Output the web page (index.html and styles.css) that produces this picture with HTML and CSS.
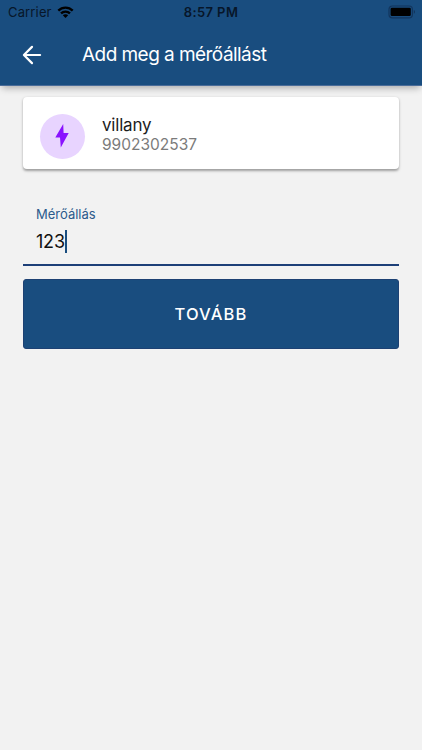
FILE: index.html
```html
<!DOCTYPE html>
<html lang="hu">
<head>
<meta charset="utf-8">
<title>Add meg a mérőállást</title>
<link rel="stylesheet" href="styles.css">
</head>
<body>

<header class="appbar">
	<div class="status">
		<div class="status-left">
			<span class="carrier">Carrier</span>
			<svg class="wifi" viewBox="0 0 17 12">
				<path class="arc" d="M1.3,4.6 C5.3,0.5 11.7,0.5 15.7,4.6"/>
				<path class="arc" d="M4,7.4 C6.5,4.9 10.5,4.9 13,7.4"/>
				<path d="M8.5,12 L5.8,9.3 C7.2,7.9 9.8,7.9 11.2,9.3 Z"/>
			</svg>
		</div>
		<span class="time">8:57 PM</span>
		<div class="status-right">
			<svg class="battery" viewBox="0 0 28 14">
				<rect class="shell" x="1" y="1" width="23.4" height="11.8" rx="3.4"/>
				<rect x="2.6" y="2.7" width="20.2" height="8.4" rx="1.3"/>
				<path class="tip" d="M25.8,5 C27.4,5.4 27.4,8.4 25.8,8.8 Z"/>
			</svg>
		</div>
	</div>
	<div class="nav">
		<svg class="back" viewBox="0 0 20 20">
			<path d="M18.1,10 H2.2 M10,1.9 L1.9,10 L10,18.1"/>
		</svg>
		<h1 class="title">Add meg a mérőállást</h1>
	</div>
</header>

<main class="content">
	<section class="card">
		<div class="badge">
			<svg class="bolt" viewBox="0 0 14 24">
				<path d="M8.2,0 L0.3,13.4 H5 L5.8,23.6 L13.7,9.1 H8.6 Z"/>
			</svg>
		</div>
		<div class="meter">
			<div class="name">villany</div>
			<div class="number">9902302537</div>
		</div>
	</section>

	<div class="field">
		<div class="label">Mérőállás</div>
		<div class="value"><span class="digits">123</span><span class="caret"></span></div>
	</div>

	<button class="next">TOVÁBB</button>
</main>

</body>
</html>
```
FILE: styles.css
```css
* {box-sizing: border-box;}

body {
	margin: 0;
	min-height: 100vh;
	background: #f2f2f2;
	font-family: Inter, "Liberation Sans", sans-serif;
	color: #1c1c1c;
}

svg {display: block;}

.appbar {
	height: 86px;
	background: #194d7f;
	border-bottom: 1px solid #4a6c99;
	box-shadow: 0 4px 7px -2px rgba(0,0,0,.3);
}

.status {
	display: grid;
	grid-template-columns: 1fr auto 1fr;
	align-items: center;
	height: 24px;
	padding: 0 6px;
	color: #071629;
	font-size: 13px;
	line-height: 24px;
}
.status-left {display: flex; align-items: center; gap: 5px; padding-left: 2px;}
.status-right {display: flex; justify-content: flex-end;}
.carrier {letter-spacing: .15px;}
.time {font-weight: 600; letter-spacing: .4px;}
.wifi {width: 17px; height: 12px;}
.wifi .arc {fill: none; stroke: #000; stroke-width: 2.3;}
.battery {width: 28px; height: 14px; margin-top: -1px;}
.battery .shell {fill: none; stroke: #12355d; stroke-width: 1.2;}
.battery .tip {fill: #12355d;}

.nav {
	display: flex;
	align-items: center;
	height: 61px;
	padding-left: 22px;
}
.back {width: 20px; height: 20px; margin-right: 40px;}
.back path {fill: none; stroke: #fff; stroke-width: 2.2; stroke-linecap: round; stroke-linejoin: round;}
.title {
	margin: 0;
	color: #fff;
	font-size: 19px;
	font-weight: 400;
	letter-spacing: -.55px;
	line-height: 24px;
}

.content {padding: 11px 23px 0;}

.card {
	display: flex;
	align-items: center;
	height: 72px;
	padding: 6px 17px 0;
	background: #fff;
	border-radius: 4px;
	box-shadow: 0 1.5px 2.5px rgba(0,0,0,.35);
}
.badge {
	display: flex;
	align-items: center;
	justify-content: center;
	width: 45px;
	height: 45px;
	margin-right: 17px;
	border-radius: 50%;
	background: #e8d4ff;
}
.bolt {width: 14px; height: 24px; margin-right: 2px; fill: #8a12ff;}
.meter {padding-bottom: 3px;}
.name {font-size: 17px; line-height: 20px; letter-spacing: -.2px;}
.number {color: #7b7b7b; font-size: 15.5px; line-height: 20px;}

.field {
	height: 70px;
	margin-top: 27px;
	padding: 10px 13px 0;
	border-bottom: 2px solid #1d3f78;
}
.label {color: #2b5a8c; font-size: 13px; line-height: 16px;}
.value {display: flex; align-items: center; height: 24px; margin-top: 7px; color: #111;}
.digits {font-size: 18px; letter-spacing: -.2px;}
.caret {width: 2px; height: 23px; background: #194d7f;}

.next {
	display: block;
	width: 100%;
	height: 70px;
	margin-top: 13px;
	padding: 0;
	border: 1px solid #1d4173;
	border-radius: 3px;
	background: #194d7f;
	color: #fff;
	font: 500 16.5px Inter, "Liberation Sans", sans-serif;
	letter-spacing: 1.1px;
}
```
